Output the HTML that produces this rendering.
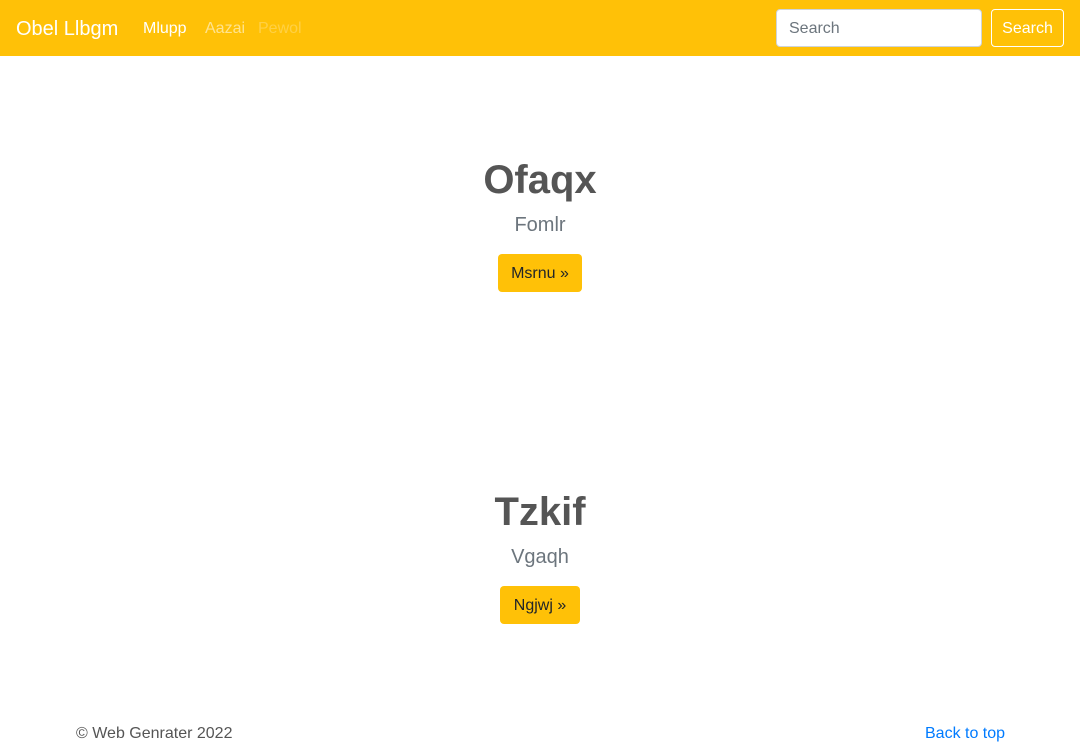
<!DOCTYPE html>
<html><head><style>
body{margin:0;width:1080px;height:744px;font-family:"Liberation Sans",sans-serif;background:#fff;color:#212529;position:relative;overflow:hidden}
nav{height:56px;background:#ffc107;position:relative}
.brand{position:absolute;left:16px;top:17px;font-size:20px;color:#fff;line-height:24px}
.nl{position:absolute;top:19px;font-size:16px;line-height:20px}
input{position:absolute;left:776px;top:9px;width:206px;height:38px;box-sizing:border-box;border:1px solid #ced4da;border-radius:4px;padding:8px 12px 6px;font-size:16px;font-family:inherit;color:#6c757d}
.sb{position:absolute;left:991px;top:9px;width:73px;height:38px;box-sizing:border-box;border:1px solid #fff;border-radius:4px;color:#fff;font-size:16px;text-align:center;line-height:38px}
h1{position:absolute;left:0;width:1080px;text-align:center;margin:0;font-size:40px;font-weight:bold;color:#555;line-height:48px}
.p{position:absolute;left:0;width:1080px;text-align:center;font-size:20px;font-weight:300;color:#6c757d;line-height:24px}
.b{position:absolute;background:#ffc107;border-radius:4px;height:38px;line-height:40px;text-align:center;font-size:16px;color:#212529}
.f{position:absolute;top:724px;font-size:16px;line-height:20px}
</style></head><body>
<nav><div class="brand">Obel Llbgm</div>
<div class="nl" style="left:143px;color:#fff">Mlupp</div>
<div class="nl" style="left:205px;color:rgba(255,255,255,.55)">Aazai</div>
<div class="nl" style="left:258px;color:rgba(255,255,255,.25)">Pewol</div>
<input value="Search"><div class="sb">Search</div></nav>
<h1 style="top:156px">Ofaqx</h1>
<div class="p" style="top:213px">Fomlr</div>
<div class="b" style="left:498px;top:254px;width:84px">Msrnu »</div>
<h1 style="top:488px">Tzkif</h1>
<div class="p" style="top:545px">Vgaqh</div>
<div class="b" style="left:500px;top:586px;width:80px">Ngjwj »</div>
<div class="f" style="left:76px;color:#555">© Web Genrater 2022</div>
<div class="f" style="left:925px;color:#007bff">Back to top</div>
</body></html>
